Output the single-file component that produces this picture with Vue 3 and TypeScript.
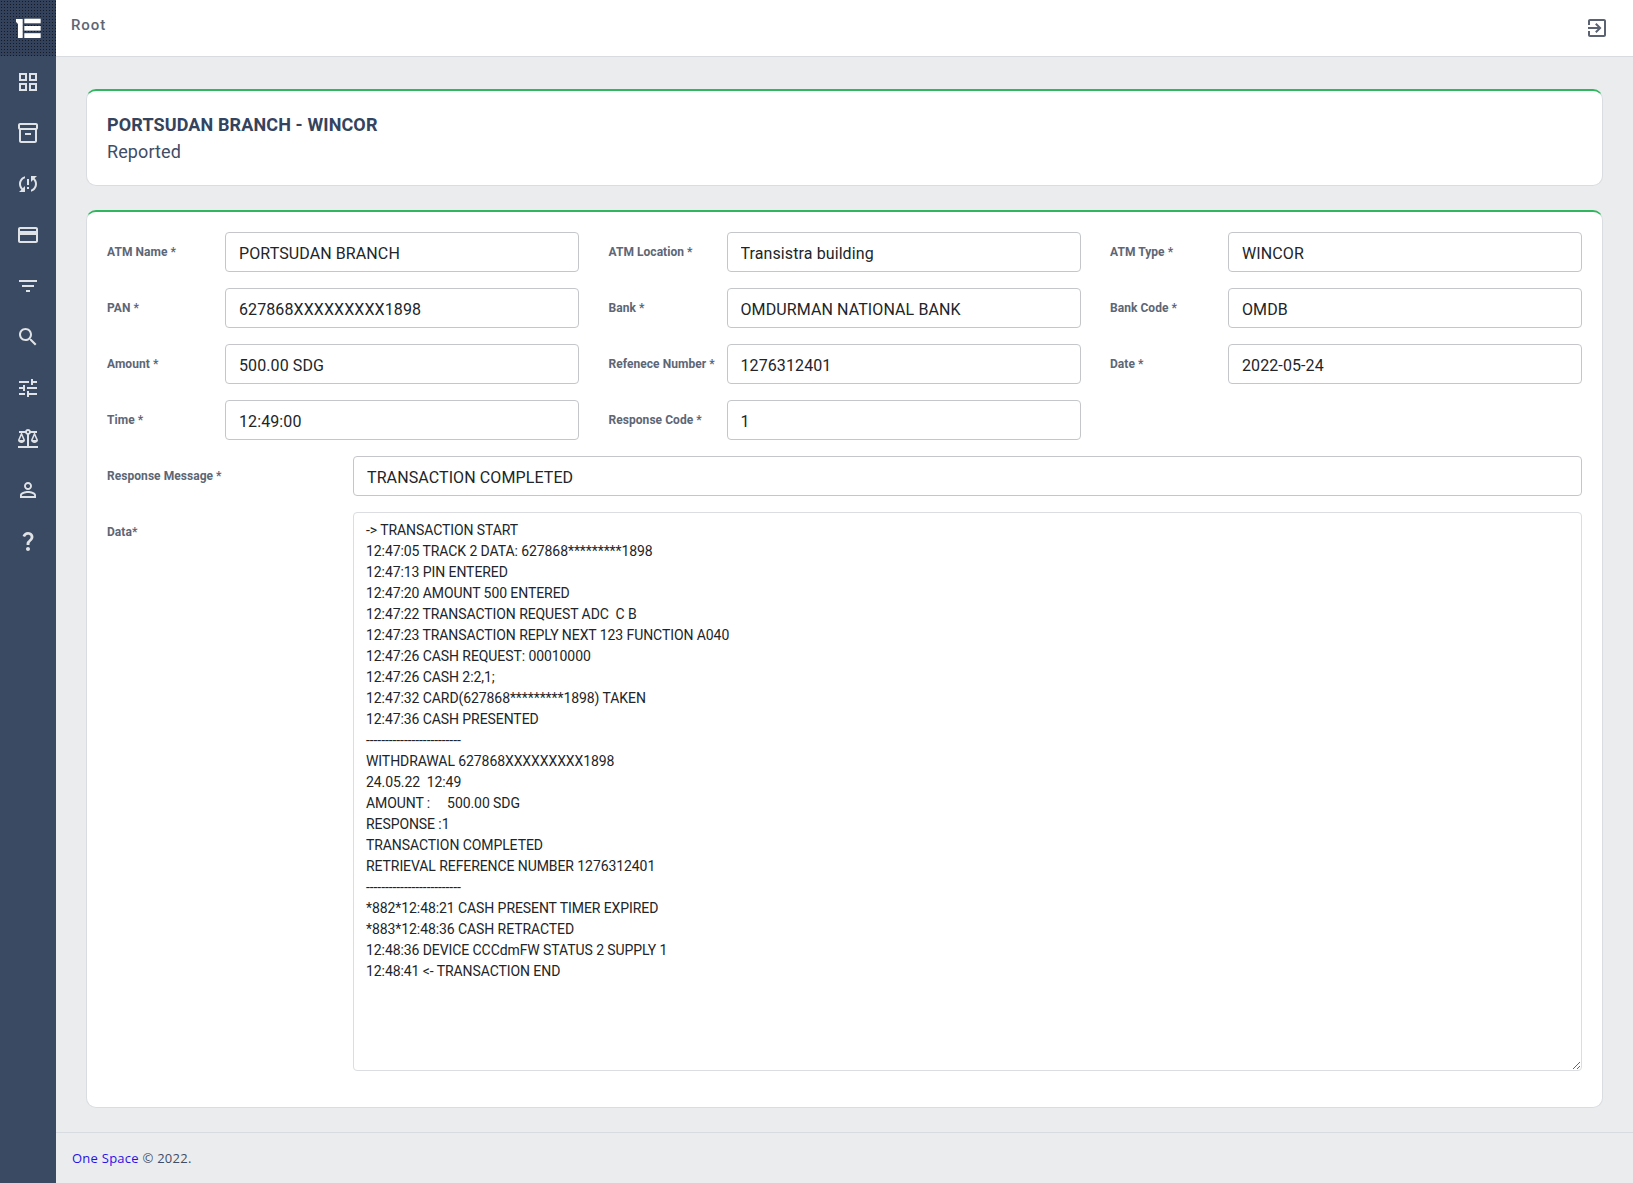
<template>
  <div class="layout">
    <aside class="side">
      <div class="logo">
        <svg width="26" height="22" viewBox="0 0 26 22">
          <path d="M1 2 H7.7 V21 H3 V7 L1 5 Z" fill="#fff" />
          <rect x="9.3" y="1.7" width="16.4" height="4.6" fill="#fff" />
          <rect x="9.3" y="9" width="16.4" height="4.6" fill="#fff" />
          <rect x="9.3" y="16.2" width="16.4" height="4.8" fill="#fff" />
        </svg>
      </div>
      <nav class="nav">
        <a v-for="icon in navIcons" :key="icon" class="nav-item">
          <svg width="24" height="24" viewBox="0 0 24 24"><path :d="icon" fill="currentColor" /></svg>
        </a>
      </nav>
    </aside>

    <div class="main">
      <header class="topbar">
        <span class="crumb">Root</span>
        <svg class="exit" width="24" height="24" viewBox="0 0 24 24">
          <path fill="currentColor" d="M10.09 15.59L11.5 17l5-5-5-5-1.41 1.41L12.67 11H3v2h9.67l-2.58 2.59zM19 3H5c-1.11 0-2 .9-2 2v4h2V5h14v14H5v-4H3v4c0 1.1.89 2 2 2h14c1.1 0 2-.9 2-2V5c0-1.1-.9-2-2-2z" />
        </svg>
      </header>

      <main class="content">
        <section class="card head-card">
          <h1>PORTSUDAN BRANCH - WINCOR</h1>
          <p>Reported</p>
        </section>

        <section class="card form-card">
          <div class="grid">
            <div v-for="f in fields" :key="f.label" class="field">
              <label>{{ f.label }} *</label>
              <input type="text" :value="f.value" />
            </div>
          </div>
          <div class="wide">
            <label>Response Message *</label>
            <input type="text" value="TRANSACTION COMPLETED" />
          </div>
          <div class="wide">
            <label>Data*</label>
            <textarea :value="dataText"></textarea>
          </div>
        </section>
      </main>

      <footer class="foot"><a>One Space</a> © 2022.</footer>
    </div>
  </div>
</template>

<script setup lang="ts">
const navIcons = [
  'M3 3h8v8H3V3zm2 2v4h4V5H5zm8-2h8v8h-8V3zm2 2v4h4V5h-4zM3 13h8v8H3v-8zm2 2v4h4v-4H5zm8-2h8v8h-8v-8zm2 2v4h4v-4h-4z',
  'M20 2H4c-1 0-2 .9-2 2v3.01c0 .72.43 1.34 1 1.69V20c0 1.1 1.1 2 2 2h14c.9 0 2-.9 2-2V8.7c.57-.35 1-.97 1-1.69V4c0-1.1-1-2-2-2zm-1 18H5V9h14v11zm1-13H4V4h16v3zM9 12h6v2H9z',
  'M3 12c0 2.21.91 4.2 2.36 5.64L3 20h6v-6l-2.24 2.24C5.68 15.15 5 13.66 5 12c0-2.61 1.67-4.83 4-5.65V4.26C5.55 5.15 3 8.27 3 12zm8 5h2v-2h-2v2zM21 4h-6v6l2.24-2.24C18.32 8.85 19 10.34 19 12c0 2.61-1.67 4.83-4 5.65v2.09c3.45-.89 6-4.01 6-7.74 0-2.21-.91-4.2-2.36-5.64L21 4zm-10 9h2V7h-2v6z',
  'M20 4H4c-1.11 0-1.99.89-1.99 2L2 18c0 1.11.89 2 2 2h16c1.11 0 2-.89 2-2V6c0-1.11-.89-2-2-2zm0 14H4v-6h16v6zm0-10H4V6h16v2z',
  'M10 18h4v-2h-4v2zM3 6v2h18V6H3zm3 7h12v-2H6v2z',
  'M15.5 14h-.79l-.28-.27C15.41 12.59 16 11.11 16 9.5 16 5.91 13.09 3 9.5 3S3 5.91 3 9.5 5.91 16 9.5 16c1.61 0 3.09-.59 4.23-1.57l.27.28v.79l5 4.99L20.49 19l-4.99-5zm-6 0C7.01 14 5 11.99 5 9.5S7.01 5 9.5 5 14 7.01 14 9.5 11.99 14 9.5 14z',
  'M3 17v2h6v-2H3zM3 5v2h10V5H3zm10 16v-2h8v-2h-8v-2h-2v6h2zM7 9v2H3v2h4v2h2V9H7zm14 4v-2H11v2h10zm-6-4h2V7h4V5h-4V3h-2v6z',
  'M13 7.83c.85-.3 1.53-.98 1.83-1.83H18l-3 7c0 1.66 1.57 3 3.5 3s3.5-1.34 3.5-3l-3-7h2V4h-6.17c-.41-1.17-1.52-2-2.83-2s-2.42.83-2.83 2H3v2h2l-3 7c0 1.66 1.57 3 3.5 3S9 14.66 9 13L6 6h3.17c.3.85.98 1.53 1.83 1.83V19H2v2h20v-2h-9V7.83zM20.37 13h-3.74l1.87-4.36L20.37 13zm-13 0H3.63L5.5 8.64 7.37 13zM12 6c-.55 0-1-.45-1-1s.45-1 1-1 1 .45 1 1-.45 1-1 1z',
  'M12 5.9c1.16 0 2.1.94 2.1 2.1s-.94 2.1-2.1 2.1S9.9 9.16 9.9 8s.94-2.1 2.1-2.1m0 9c2.97 0 6.1 1.46 6.1 2.1v1.1H5.9V17c0-.64 3.13-2.1 6.1-2.1M12 4C9.79 4 8 5.79 8 8s1.79 4 4 4 4-1.79 4-4-1.79-4-4-4zm0 9c-2.67 0-8 1.34-8 4v3h16v-3c0-2.66-5.33-4-8-4z',
  'M11.07 12.85c.77-1.39 2.25-2.21 3.11-3.44.91-1.29.4-3.7-2.18-3.7-1.69 0-2.52 1.28-2.87 2.34L6.54 6.96C7.25 4.83 9.18 3 11.99 3c2.35 0 3.96 1.07 4.78 2.41.7 1.15 1.11 3.3.03 4.9-1.2 1.77-2.35 2.31-2.97 3.45-.25.46-.35.76-.35 2.24h-2.89c-.01-.78-.13-2.05.48-3.15zM14 20c0 1.1-.9 2-2 2s-2-.9-2-2 .9-2 2-2 2 .9 2 2z'
]

const fields = [
  { label: 'ATM Name', value: 'PORTSUDAN BRANCH' },
  { label: 'ATM Location', value: 'Transistra building' },
  { label: 'ATM Type', value: 'WINCOR' },
  { label: 'PAN', value: '627868XXXXXXXXX1898' },
  { label: 'Bank', value: 'OMDURMAN NATIONAL BANK' },
  { label: 'Bank Code', value: 'OMDB' },
  { label: 'Amount', value: '500.00 SDG' },
  { label: 'Refenece Number', value: '1276312401' },
  { label: 'Date', value: '2022-05-24' },
  { label: 'Time', value: '12:49:00' },
  { label: 'Response Code', value: '1' }
]

const dataText = `-> TRANSACTION START
12:47:05 TRACK 2 DATA: 627868*********1898
12:47:13 PIN ENTERED
12:47:20 AMOUNT 500 ENTERED
12:47:22 TRANSACTION REQUEST ADC  C B
12:47:23 TRANSACTION REPLY NEXT 123 FUNCTION A040
12:47:26 CASH REQUEST: 00010000
12:47:26 CASH 2:2,1;
12:47:32 CARD(627868*********1898) TAKEN
12:47:36 CASH PRESENTED
-------------------------
WITHDRAWAL 627868XXXXXXXXX1898
24.05.22  12:49
AMOUNT :     500.00 SDG
RESPONSE :1
TRANSACTION COMPLETED
RETRIEVAL REFERENCE NUMBER 1276312401
-------------------------
*882*12:48:21 CASH PRESENT TIMER EXPIRED
*883*12:48:36 CASH RETRACTED
12:48:36 DEVICE CCCdmFW STATUS 2 SUPPLY 1
12:48:41 <- TRANSACTION END`
</script>

<style>
html, body {
  margin: 0;
  background: #ebecee;
}
</style>

<style scoped>
.layout {
  display: flex;
  height: 1183px;
  overflow: hidden;
  font-family: Roboto, "Liberation Sans", sans-serif;
}
.side {
  flex: 0 0 56px;
  background: #3a4a62;
  color: #dfe2e6;
}
.logo {
  height: 56px;
  display: flex;
  align-items: center;
  justify-content: center;
  background-color: #33425a;
  background-image: radial-gradient(#141b26 0.7px, transparent 0.9px);
  background-size: 3px 3px;
}
.nav {
  display: flex;
  flex-direction: column;
  align-items: center;
}
.nav-item {
  height: 51px;
  display: flex;
  align-items: center;
  justify-content: center;
}
.main {
  flex: 1;
  min-width: 0;
  display: flex;
  flex-direction: column;
}
.topbar {
  height: 57px;
  box-sizing: border-box;
  flex: none;
  background: #fff;
  border-bottom: 1px solid #d8dbe0;
  display: flex;
  justify-content: space-between;
  padding: 16px 24px 0 15px;
}
.crumb {
  font-size: 15px;
  font-weight: 500;
  color: #5d6675;
  letter-spacing: 0.9px;
}
.exit {
  color: #5b6372;
}
.content {
  flex: 1;
  padding: 32px 30px 24px;
  display: flex;
  flex-direction: column;
  gap: 24px;
}
.card {
  background: #fff;
  border: 1px solid #d9dce1;
  border-radius: 10px;
  padding: 0 20px;
  box-sizing: border-box;
}
.head-card {
  border-top: 2px solid #2fb65e;
  height: 97px;
  padding-top: 22px;
}
.head-card h1 {
  margin: 0;
  font-size: 18px;
  line-height: 24px;
  font-weight: 700;
  color: #34435e;
  letter-spacing: 0.12px;
}
.head-card p {
  margin: 3px 0 0;
  font-size: 18px;
  line-height: 24px;
  color: #3f4d66;
  letter-spacing: 0.1px;
}
.form-card {
  border-top: 2px solid #2fb65e;
  height: 898px;
  padding-top: 20px;
}
.grid {
  display: grid;
  grid-template-columns: repeat(3, 1fr);
  column-gap: 29.5px;
  row-gap: 16px;
}
.field {
  display: flex;
  align-items: flex-start;
}
label {
  font-size: 12px;
  font-weight: 700;
  color: #5d6675;
  line-height: 18px;
  padding-top: 11px;
  white-space: nowrap;
  letter-spacing: 0.05px;
}
.field label {
  flex: 0 0 118px;
}
input,
textarea {
  border: 1px solid #c4c6c9;
  border-radius: 4px;
  box-sizing: border-box;
  background: #fff;
  color: #212529;
  outline: none;
  font-family: Roboto, "Liberation Sans", sans-serif;
}
input {
  flex: 1;
  min-width: 0;
  height: 40px;
  font-size: 16px;
  padding: 2px 13px 0;
  letter-spacing: 0.1px;
}
.wide {
  display: flex;
  align-items: flex-start;
  margin-top: 16px;
}
.wide label {
  flex: 0 0 246px;
}
textarea {
  flex: 1;
  height: 559px;
  border-color: #dcdde1;
  font-family: Roboto, sans-serif;
  font-size: 14px;
  letter-spacing: -0.08px;
  line-height: 21px;
  padding: 7px 12px 5px;
  white-space: pre;
  overflow: hidden;
}
.foot {
  height: 51px;
  flex: none;
  box-sizing: border-box;
  border-top: 1px solid #d8dbe0;
  padding: 16px 16px 0;
  font-family: "Open Sans", sans-serif;
  font-size: 13px;
  letter-spacing: 0.25px;
  color: #3f4d66;
}
.foot a {
  color: #2a10e8;
}
</style>
